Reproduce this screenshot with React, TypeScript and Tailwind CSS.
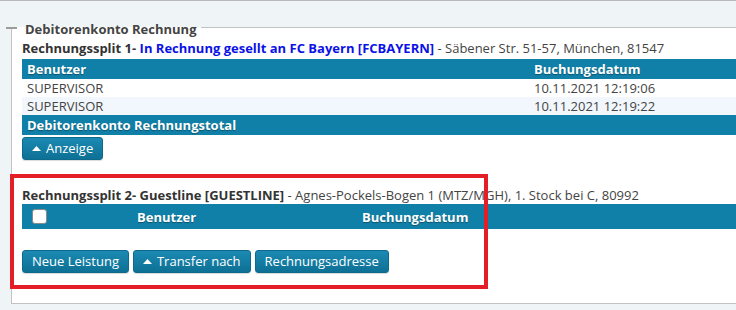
const UpArrow = () => (
  <svg width="9" height="5" viewBox="0 0 9 5" className="mr-[5px]">
    <path d="M0 5 L4.5 0 L9 5 Z" fill="#ffffff" />
  </svg>
)

const Button = ({ label, arrow = false }: { label: string; arrow?: boolean }) => (
  <button className="flex h-[23px] items-center rounded-[3px] border border-[#0c6a8d] bg-gradient-to-b from-[#1b8ab2] to-[#0e7095] px-[9px] text-[13px] leading-none text-white shadow-[0_1px_1px_rgba(0,0,0,0.15)]">
    {arrow && <UpArrow />}
    {label}
  </button>
)

const shadow = '[text-shadow:0_1px_1px_rgba(0,0,0,0.35)]'

export default function App() {
  return (
    <div
      className="relative h-[310px] w-[736px] overflow-hidden border-t border-[#b9b9b9] bg-[#eff4f7] pt-[26px] text-[13px] leading-[18px] text-[#444]"
      style={{ fontFamily: '"Open Sans", "Noto Sans", sans-serif' }}
    >
      <div className="relative ml-[11px] h-[277px] border-t border-b border-l border-[#c2c2c2] bg-white px-[10px]">
        <div className="-ml-[10px] -mt-[8px] w-fit bg-[linear-gradient(to_bottom,transparent_7px,white_7px)] pl-[13px] pr-[4px] font-bold text-[#444]">
          Debitorenkonto Rechnung
        </div>
        <div className="absolute -left-[6px] -top-[1px] h-[2px] w-[11px] bg-[#9c9c9c]" />

        <div className="mt-[1px] whitespace-nowrap">
          <span className="font-bold text-[#333]">Rechnungssplit 1- </span>
          <span className="font-bold text-[#0b12e6]">In Rechnung gesellt an FC Bayern [FCBAYERN]</span>
          <span> - Säbener Str. 51-57, München, 81547</span>
        </div>

        <div className="mt-[2px] -mr-[10px]">
          <div className={`grid h-[20px] grid-cols-[507px_1fr] items-center bg-[#1180a8] px-[5px] font-bold text-white ${shadow}`}>
            <span>Benutzer</span>
            <span>Buchungsdatum</span>
          </div>
          <div className="grid h-[18px] grid-cols-[507px_1fr] items-center bg-white px-[5px]">
            <span>SUPERVISOR</span>
            <span>10.11.2021 12:19:06</span>
          </div>
          <div className="grid h-[18px] grid-cols-[507px_1fr] items-center bg-[#f1f7fc] px-[5px]">
            <span>SUPERVISOR</span>
            <span>10.11.2021 12:19:22</span>
          </div>
          <div className={`flex h-[20px] items-center bg-[#1180a8] px-[5px] font-bold text-white ${shadow}`}>
            Debitorenkonto Rechnungstotal
          </div>
        </div>

        <div className="mt-[2px] flex">
          <Button label="Anzeige" arrow />
        </div>

        <div className="mt-[26px] whitespace-nowrap">
          <span className="font-bold text-[#333]">Rechnungssplit 2- Guestline [GUESTLINE]</span>
          <span> - Agnes-Pockels-Bogen 1 (MTZ/MGH), 1. Stock bei C, 80992</span>
        </div>

        <div className={`-mr-[10px] flex h-[25px] items-center bg-[#1180a8] font-bold text-white ${shadow}`}>
          <span className="ml-[10px] h-[15px] w-[15px] rounded-[3px] border border-[#8a8a8a] bg-white" />
          <span className="ml-[90px] w-[225px]">Benutzer</span>
          <span>Buchungsdatum</span>
        </div>

        <div className="mt-[21px] flex gap-[4px]">
          <Button label="Neue Leistung" />
          <Button label="Transfer nach" arrow />
          <Button label="Rechnungsadresse" />
        </div>
      </div>

      <div className="absolute left-[10px] top-[173px] h-[115px] w-[478px] border-4 border-[#e41e26]" />
    </div>
  )
}
